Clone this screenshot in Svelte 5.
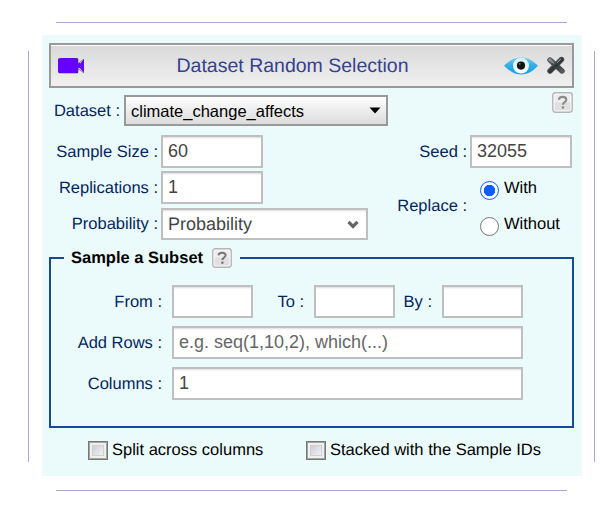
<script>
  let size = $state('60');
  let reps = $state('1');
  let seed = $state('32055');
  let replace = $state('with');
  let columns = $state('1');
</script>

{#snippet help(tone)}
  <svg class="help" width="21" height="21" viewBox="0 0 21 21">
    <rect x=".8" y=".8" width="19.4" height="19.4" rx="2.6" fill="#fafafa" stroke="#b5b5b5" stroke-width="1.4" />
    <rect x="2.6" y="2.6" width="15.8" height="8" rx="1" fill="#ededed" />
    <rect x="2.6" y="10.200" width="15.8" height="8.200" rx="1" fill="#e0e0e0" />
    <path d="M6.9 7.7C7 5.6 8.5 4.9 10.5 4.9c2.3 0 3.8 1 3.8 2.8 0 2.4-3.4 2.3-3.4 5" fill="none" stroke={tone} stroke-width="2.1" />
    <rect x="9.7" y="14.3" width="2.4" height="2.3" fill={tone} />
  </svg>
{/snippet}

<div class="frame">
  <div class="rule"></div>
  <div class="middle">
    <div class="side"></div>
    <main class="panel">
      <header>
        <svg class="camera" width="27" height="16" viewBox="0 0 27 16">
          <rect x=".3" y=".3" width="20" height="15" rx="1" fill="#37304c" />
          <rect x="0" y="1" width="20" height="13" fill="#6600ff" />
          <rect x="1.5" y="0" width="17.5" height="15" rx="1" fill="#6600ff" />
          <path d="M20 8 26 1v14z" fill="#6600ff" />
          <rect x="20" y="5" width="2" height="5" fill="#6600ff" />
          <path d="m20 5.5 6-4.5M20 10.5l6 4.5" stroke="#67627c" stroke-width=".8" />
        </svg>
        <h1>Dataset Random Selection</h1>
        <svg class="eye" width="34" height="20" viewBox="0 0 34 20">
          <defs>
            <linearGradient id="eg" x1="0" y1="0" x2="0" y2="1">
              <stop offset="0" stop-color="#7fcdee" />
              <stop offset=".45" stop-color="#35b0e5" />
              <stop offset="1" stop-color="#0ba0e5" />
            </linearGradient>
            <linearGradient id="iris" x1="0" y1="0" x2="0" y2="1">
              <stop offset="0" stop-color="#cfeefa" />
              <stop offset="1" stop-color="#fff" />
            </linearGradient>
          </defs>
          <path d="M0 9.7C5 5.2 9.500 1.200 17 1.200S29 5.200 34 9.700C29 14.500 24.500 18.500 17 18.500S5 14.500 0 9.700Z" fill="url(#eg)" />
          <circle cx="17" cy="9.600" r="8" fill="url(#iris)" />
          <circle cx="17" cy="9.600" r="4.100" fill="#141414" />
          <circle cx="15.700" cy="7.800" r=".9" fill="#777" />
        </svg>
        <svg class="close" width="20" height="20" viewBox="0 0 20 20">
          <defs>
            <linearGradient id="xg" x1="0" y1="0" x2="1" y2="1">
              <stop offset="0" stop-color="#7b8084" />
              <stop offset=".5" stop-color="#2e3336" />
              <stop offset="1" stop-color="#575b5e" />
            </linearGradient>
          </defs>
          <path d="m4 4 12 11M15.500 3.500 4 15" stroke="#474b4e" stroke-width="5.400" stroke-linecap="round" />
          <path d="m4 4 12 11M15.500 3.500 4 15" stroke="url(#xg)" stroke-width="3.800" stroke-linecap="round" />
          <path d="m3.500 3.300 4.500 4M14.500 3.300 11.500 6.500" stroke="#a6abae" stroke-width="1" stroke-linecap="round" />
        </svg>
      </header>

      <div class="dataset">
        <span class="label">Dataset :</span>
        <button class="picker">
          <span>climate_change_affects</span>
          <svg width="12" height="7" viewBox="0 0 12 7"><path d="M.5.500h11L6 6.500z" /></svg>
        </button>
        {@render help('#8c8c8c')}
      </div>

      <div class="settings">
        <div class="fields">
          <label class="row"><span class="label">Sample Size :</span><input class="short" bind:value={size} /></label>
          <label class="row"><span class="label">Replications :</span><input class="short" bind:value={reps} /></label>
          <div class="row prob">
            <span class="label">Probability :</span>
            <div class="combo">
              <span>Probability</span>
              <svg width="12" height="9" viewBox="0 0 12 9"><path d="m1.500 1.800 4.500 4.500 4.500-4.500" fill="none" stroke="#666" stroke-width="3.300" /></svg>
            </div>
          </div>
        </div>
        <div class="options">
          <label class="row"><span class="label">Seed :</span><input class="short" bind:value={seed} /></label>
          <div class="replace">
            <span class="label">Replace :</span>
            <div class="radios">
              <label><input type="radio" value="with" bind:group={replace} /><span>With</span></label>
              <label><input type="radio" value="without" bind:group={replace} /><span>Without</span></label>
            </div>
          </div>
        </div>
      </div>

      <section class="subset">
        <div class="legend">
          <i class="stub"></i>
          <b>Sample a Subset</b>
          {@render help('#777')}
          <i class="line"></i>
        </div>
        <div class="box">
          <div class="row">
            <span class="label">From :</span><input class="tiny" />
            <span class="label to">To :</span><input class="tiny" />
            <span class="label by">By :</span><input class="tiny" />
          </div>
          <label class="row"><span class="label">Add Rows :</span><input class="wide" placeholder="e.g. seq(1,10,2), which(...)" /></label>
          <label class="row"><span class="label">Columns :</span><input class="wide" bind:value={columns} /></label>
        </div>
      </section>

      <div class="checks">
        <label><i class="check"></i><span>Split across columns</span></label>
        <label><i class="check"></i><span>Stacked with the Sample IDs</span></label>
      </div>
    </main>
    <div class="side"></div>
  </div>
  <div class="rule"></div>
</div>

<style>
  :global(body) { background: #fff; }
  .frame, .frame :global(*) { box-sizing: border-box; }
  .frame {
    width: 616px; height: 514px; padding-top: 22px; overflow: hidden;
    display: flex; flex-direction: column;
    font: 16.5px/20px "Liberation Sans", Arial, sans-serif; color: #000;
    text-rendering: geometricPrecision;
  }
  .rule { height: 1px; width: 511px; margin-left: 56px; background: #aaa6d8; flex: none; }
  .middle { display: flex; height: 441px; margin: 12px 0 14px 28px; }
  .side { width: 1px; height: 411px; margin-top: 16px; background: #aaa6d8; }
  .panel { width: 540px; height: 441px; margin: 0 12px 0 13px; padding: 8px 8px 0 7px; background: #ebfafa; }

  header {
    height: 45px; display: flex; align-items: center; padding: 0 6px 0 7px;
    border: 2px solid #999; box-shadow: inset 0 1px #fff;
    background: linear-gradient(#d9d9d9, #f0f0f0);
  }
  .camera { margin-top: 1px; }
  h1 { flex: 1; margin: 0 0 0 -4px; text-align: center; font-size: 19.5px; font-weight: 400; line-height: 24px; color: #34428f; padding-top: 1px; }
  .eye { margin-right: 8px; }

  .label { color: #03265f; text-align: right; white-space: nowrap; flex: none; }
  .dataset { display: flex; height: 40px; padding-top: 4px; }
  .dataset .label { width: 71px; margin-top: 9px; }
  .picker {
    width: 264px; height: 31px; margin: 3px 0 0 4px; padding: 0 5px 0 5px;
    display: flex; align-items: center; justify-content: space-between;
    border: 2px solid #999; background: linear-gradient(#fefefe, #dcdcdc);
    font: inherit; line-height: 20px; color: #000;
  }
  .dataset :global(.help) { margin-left: 164px; }

  input:not([type]) {
    display: block; height: 33px; padding: 0 5px; border: 2px solid #bfbfbf; border-radius: 0;
    background: #fff; box-shadow: inset 0 2px 2px -1px #ddd; outline: none;
    font: 18px "Liberation Sans", Arial, sans-serif; color: #444;
  }
  input::placeholder { color: #666; opacity: 1; }
  .row { display: flex; align-items: center; height: 33px; }
  .short { width: 102px; }
  .tiny { width: 81px; }
  .wide { width: 351px; }

  .settings { display: flex; justify-content: space-between; height: 121px; padding: 7px 2px 0 0; }
  .fields .row { margin-bottom: 3px; }
  .fields .label { width: 109px; margin-right: 3px; }
  .fields .prob { height: 32px; margin-top: 4px; }
  .combo {
    width: 207px; height: 32px; display: flex; align-items: center; justify-content: space-between;
    padding: 0 7px 0 5px; border: 2px solid #bfbfbf; background: #fff;
    box-shadow: inset 0 2px 2px -1px #ddd; font-size: 18px; color: #444;
  }
  .options .row { justify-content: flex-end; }
  .options .row .label { margin-right: 3px; }
  .replace { display: flex; margin-top: 13px; }
  .replace > .label { margin-top: 15px; width: 71px; }
  .radios { margin-left: 13px; display: flex; flex-direction: column; gap: 17px; }
  .radios label { display: flex; height: 19px; width: 92px; }
  .radios input {
    appearance: none; width: 19px; height: 19px; margin: 0; border: 1px solid #767676;
    border-radius: 50%; background: #fff; flex: none;
  }
  .radios input:checked { border-color: #0a5dff; background: radial-gradient(circle, #0a5dff 5.4px, #fff 6px); }
  .radios span { margin: -3px 0 0 5px; }

  .subset { height: 180px; margin-top: -1px; }
  .legend { display: flex; align-items: center; height: 20px; position: relative; }
  .legend i { height: 2px; background: #154a96; }
  .stub { width: 15px; flex: none; }
  .line { flex: 1; margin-left: 8px; }
  .legend b { margin: -1px 0 0 7px; width: 141px; white-space: nowrap; }
  .legend :global(.help) { width: 20px; height: 20px; flex: none; }
  .box { height: 171px; margin-top: -11px; padding: 28px 0 0; border: 2px solid #154a96; border-top: 0; }
  .box .row { margin-bottom: 8px; }
  .box .row .label { width: 111px; margin-right: 10px; }
  .box .row .to { width: 51px; }
  .box .row .by { width: 37px; }

  .checks { display: flex; margin: 12px 0 0 39px; }
  .checks label { display: flex; align-items: center; height: 20px; width: 218px; white-space: nowrap; }
  .check {
    width: 20px; height: 19px; margin-right: 4px; border: 1px solid #777; flex: none;
    background: linear-gradient(135deg, #b9bfcc, #f4f4f4 80%); box-shadow: inset 0 0 0 1px #a4a4a0, inset 0 0 0 3px #efefef, inset 0 0 0 4px #cfd0d3;
  }
</style>
